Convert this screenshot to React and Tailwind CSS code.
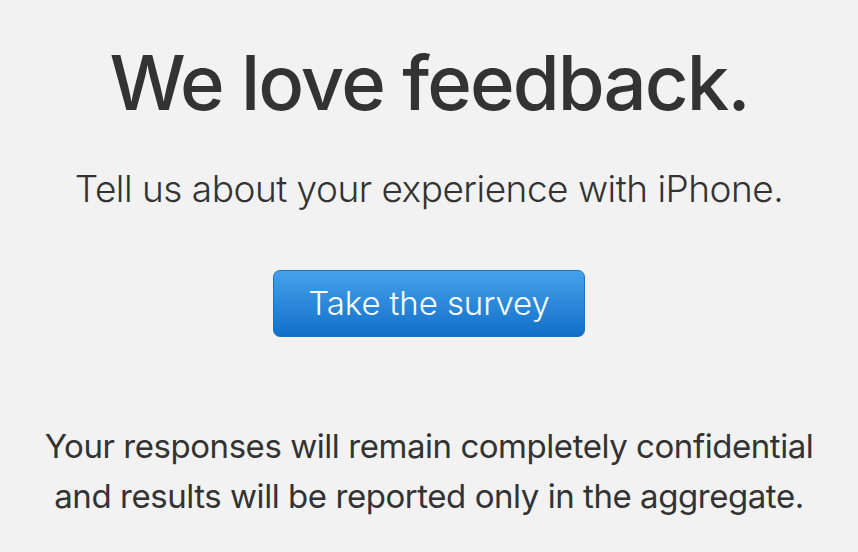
export default function App() {
  return (
    <div className="w-[858px] h-[552px] bg-[#f2f2f2] overflow-hidden flex flex-col items-center text-[#333333]" style={{ fontFamily: "Inter, 'Noto Sans', sans-serif" }}>
      <h1 className="mt-[32px] text-[76px] leading-[100px] font-medium tracking-[-1.9px] whitespace-nowrap">We love feedback.</h1>
      <p className="mt-[35px] text-[37px] leading-[44px] font-light tracking-[-0.5px] whitespace-nowrap">Tell us about your experience with iPhone.</p>
      <button className="mt-[59px] w-[312px] h-[67px] rounded-[7px] border border-[#1a72c4] bg-gradient-to-b from-[#44a2ec] to-[#0f6fc8] text-white text-[33px] font-light tracking-[-0.1px]">Take the survey</button>
      <p className="mt-[84px] text-[33px] leading-[50px] text-center font-normal tracking-[-0.45px] whitespace-nowrap">
        Your responses will remain completely confidential<br />and results will be reported only in the aggregate.
      </p>
    </div>
  );
}
